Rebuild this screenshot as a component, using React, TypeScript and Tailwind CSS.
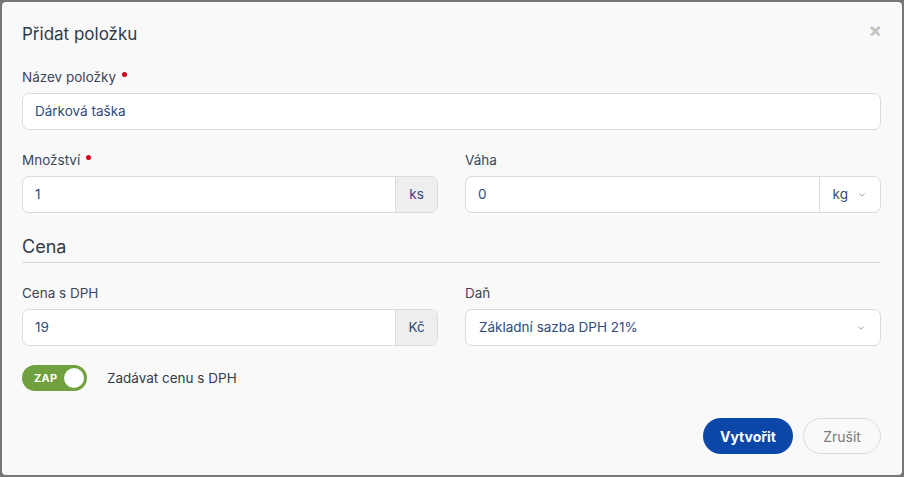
import { ChevronDown } from 'lucide-react';

const labelCls = 'block text-[13.5px] leading-5 text-[#3b4656] mb-[6px]';
const valueCls = 'text-[13.5px] text-[#2f4b7c]';

function Required() {
  return <span className="inline-block w-[5px] h-[5px] rounded-full bg-[#d0021b] ml-[6px] align-top mt-[5px]" />;
}

function AddonInput({ value, addon, select }: { value: string; addon: string; select?: boolean }) {
  return (
    <div className="flex h-[37px] rounded-[7px] border border-[#d9dbde] bg-white overflow-hidden">
      <div className={`flex-1 flex items-center px-3 ${valueCls}`}>{value}</div>
      {select ? (
        <div className={`flex items-center gap-[9px] pl-[13px] pr-[13px] border-l border-[#d9dbde] ${valueCls}`}>
          {addon}
          <ChevronDown className="w-[10px] h-[10px] text-[#5a6a85]" strokeWidth={1.5} />
        </div>
      ) : (
        <div className={`flex items-center justify-center w-[42px] bg-[#eeeeee] border-l border-[#d9dbde] ${valueCls}`}>
          {addon}
        </div>
      )}
    </div>
  );
}

export default function App() {
  return (
    <div className="w-[904px] h-[477px] bg-[#777777] p-[2px]" style={{ fontFamily: 'Inter, "Noto Sans", sans-serif' }}>
      <div className="h-full bg-[#f9f9f9] rounded-[4px] pl-5 pr-[21px] pt-5 pb-[21px] flex flex-col">
        {/* Header */}
        <div className="flex items-center justify-between h-6">
          <h2 className="text-[17px] leading-6 text-[#2f3a4a]">Přidat položku</h2>
          <span className="text-[#c2c2c2] text-[20px] font-bold leading-none -mt-[8px] mr-[-1px]">×</span>
        </div>

        {/* Název */}
        <div className="mt-[21px]">
          <label className={labelCls}>
            Název položky
            <Required />
          </label>
          <div className={`h-[37px] rounded-[7px] border border-[#d9dbde] bg-white flex items-center px-3 ${valueCls}`}>
            Dárková taška
          </div>
        </div>

        {/* Množství / Váha */}
        <div className="grid grid-cols-2 gap-x-[27px] mt-[20px]">
          <div>
            <label className={labelCls}>
              Množství
              <Required />
            </label>
            <AddonInput value="1" addon="ks" />
          </div>
          <div>
            <label className={labelCls}>Váha</label>
            <AddonInput value="0" addon="kg" select />
          </div>
        </div>

        {/* Cena section */}
        <h3 className="mt-[20px] text-[18px] leading-7 text-[#333b45]">Cena</h3>
        <div className="mt-[1px] border-t border-[#dcdcdc]" />

        <div className="grid grid-cols-2 gap-x-[27px] mt-[20px]">
          <div>
            <label className={labelCls}>Cena s DPH</label>
            <AddonInput value="19" addon="Kč" />
          </div>
          <div>
            <label className={labelCls}>Daň</label>
            <div className={`h-[37px] rounded-[7px] border border-[#d9dbde] bg-white flex items-center justify-between pl-[13px] pr-[14px] ${valueCls}`}>
              Základní sazba DPH 21%
              <ChevronDown className="w-[10px] h-[10px] text-[#5a6a85]" strokeWidth={1.5} />
            </div>
          </div>
        </div>

        {/* Toggle */}
        <div className="flex items-center mt-[19px]">
          <div className="w-[65px] h-[26px] rounded-full bg-[#71a03e] flex items-center justify-between pl-[12px] pr-[3px]">
            <span className="text-white text-[11px] font-bold tracking-[0.3px]">ZAP</span>
            <span className="w-[20px] h-[20px] rounded-full bg-white" />
          </div>
          <span className="ml-5 text-[13.5px] text-[#333b48]">Zadávat cenu s DPH</span>
        </div>

        {/* Buttons */}
        <div className="mt-auto flex justify-end gap-[10px]">
          <button className="h-[36px] w-[90px] rounded-full bg-[#0a47a9] text-white text-[14px] font-bold">Vytvořit</button>
          <button className="h-[36px] w-[78px] rounded-full border border-[#dcdcdc] text-[#7a7a7a] text-[14px]">Zrušit</button>
        </div>
      </div>
    </div>
  );
}
